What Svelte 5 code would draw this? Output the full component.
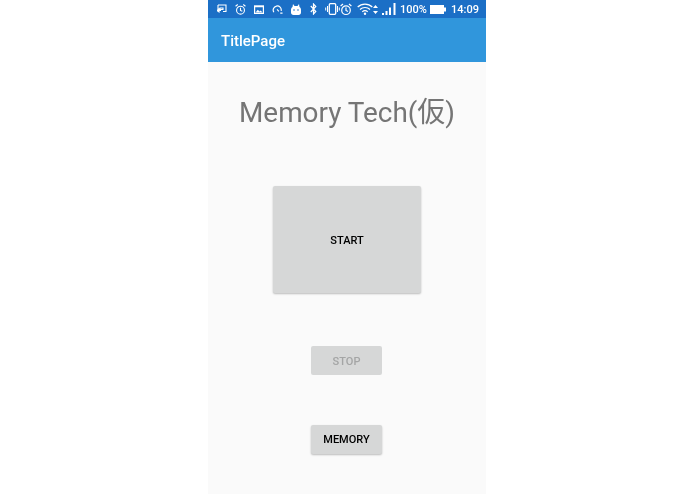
<script>
  const title = 'Memory Tech(仮)';
</script>

<div class="page">
  <main class="phone">
    <div class="status-bar">
      <div class="left-icons">
        <svg width="10" height="10" viewBox="0 0 10 10"><path d="M1 1h8v6.500H6M1 1v5.500h3M0 6.500l2-1.500v3zM3 4h3v1.500H3z" fill="none" stroke="#fff" stroke-width="1.100"/></svg>
        <svg width="11" height="13" viewBox="0 0 12 13"><circle cx="6" cy="7.200" r="4.300" fill="none" stroke="#fff" stroke-width="1.200"/><path d="M6 4.500v3l2 1M.6 3l2.400-2M11.400 3L9 1" fill="none" stroke="#fff" stroke-width="1.200"/></svg>
        <svg width="10" height="9" viewBox="0 0 10 9"><rect x=".6" y=".9" width="8.800" height="7.500" fill="none" stroke="#fff" stroke-width="1.200"/><path d="M.5 1h9v1.300H.5zM1.500 7.500l2.300-2.700 1.700 1.700 1.200-1 1.800 2z" fill="#fff"/></svg>
        <svg width="11" height="10" viewBox="0 0 12 10"><path d="M2 8.500A4.400 4.400 0 1 1 10 7" fill="none" stroke="#fff" stroke-width="1.300"/><path d="M5.500 5.500l2 2M9 9.500h2.500" fill="none" stroke="#fff" stroke-width="1.200"/></svg>
        <svg width="10" height="11" viewBox="0 0 10 11"><path d="M2 0l1.500 2h3L8 0l.5 3c1 .5 1.500 1.500 1.500 3v2.500c0 1.500-1 2.500-2.500 2.500h-5C1 11 0 10 0 8.500V6c0-1.500.5-2.500 1.500-3z" fill="#fff"/><circle cx="3" cy="6" r=".8" fill="#1b6fc6"/><circle cx="7" cy="6" r=".8" fill="#1b6fc6"/></svg>
        <svg class="bluetooth" width="7" height="12" viewBox="0 0 6 12"><path d="M.3 3l5 5.500L3 11V1l2.300 2.500L.3 9" fill="none" stroke="#fff" stroke-width="1.200"/></svg>
        <svg width="15" height="12" viewBox="0 0 15 12"><rect x="4.300" y=".7" width="6.400" height="10.600" rx="1" fill="none" stroke="#fff" stroke-width="1.300"/><path d="M2.500 3v6M.7 4.500v3M12.500 3v6M14.300 4.500v3" stroke="#fff" stroke-width="1"/></svg>
        <svg class="alarm-last" width="12" height="13" viewBox="0 0 12 13"><circle cx="6" cy="7.200" r="4.300" fill="none" stroke="#fff" stroke-width="1.200"/><path d="M6 4.500v3l2 1M.6 3l2.400-2M11.400 3L9 1" fill="none" stroke="#fff" stroke-width="1.200"/></svg>
      </div>
      <div class="right-icons">
        <svg width="16" height="12" viewBox="0 0 16 12"><path d="M.7 4a10.500 10.500 0 0 1 14.600 0M3 6.500a7.200 7.200 0 0 1 10 0M5.300 8.800a3.800 3.800 0 0 1 5.400 0" fill="none" stroke="#fff" stroke-width="1.200"/><circle cx="8" cy="10.800" r="1.200" fill="#fff"/></svg>
        <svg width="5" height="9" viewBox="0 0 5 9"><path d="M2.500 0L5 3H0zM2.500 9L0 6h5z" fill="#fff"/></svg>
        <svg class="signal" width="14" height="12" viewBox="0 0 14 12"><rect x="0" y="10" width="2" height="2" fill="#fff"/><rect x="3.500" y="8" width="2" height="4" fill="#fff"/><rect x="7" y="4.500" width="2" height="7.500" fill="#fff"/><rect x="11.500" y="0" width="2" height="12" fill="#fff"/></svg>
        <span class="percent">100%</span>
        <svg class="battery" width="16" height="9" viewBox="0 0 16 9"><path d="M0 0h14v2.500h2v4h-2V9H0z" fill="#fff"/></svg>
        <span class="clock">14:09</span>
      </div>
    </div>

    <header class="app-bar"><span>TitlePage</span></header>

    <section class="content">
      <h1>{title}</h1>
      <button class="start"><span>START</span></button>
      <button class="small stop" disabled><span>STOP</span></button>
      <button class="small memory"><span>MEMORY</span></button>
    </section>
  </main>
</div>

<style>
  :global(body) {
    margin: 0;
    background: #fff;
  }

  .page {
    display: flex;
    justify-content: center;
    height: 494px;
    overflow: hidden;
    padding-right: 1px;
    box-sizing: border-box;
  }

  .phone {
    display: flex;
    flex-direction: column;
    width: 278px;
    height: 494px;
    background: #fafafa;
    font-family: Roboto, "Noto Sans CJK JP", sans-serif;
  }

  .status-bar {
    display: flex;
    align-items: center;
    justify-content: space-between;
    flex: none;
    height: 18px;
    padding: 0 7px 0 9px;
    box-sizing: border-box;
    background: #1b6fc6;
    color: #fff;
  }

  .left-icons {
    display: flex;
    align-items: center;
    gap: 8px;
  }

  .bluetooth {
    margin-left: 1px;
  }

  .alarm-last {
    margin-left: -8px;
  }

  .right-icons {
    display: flex;
    align-items: center;
  }

  .signal {
    margin-left: 4px;
  }

  .percent {
    margin-left: 4px;
    font-size: 11px;
    font-weight: 500;
    will-change: transform;
  }

  .battery {
    margin-left: 3px;
  }

  .clock {
    margin-left: 5px;
    font-size: 11px;
    font-weight: 500;
    will-change: transform;
  }

  .app-bar {
    flex: none;
    height: 44px;
    padding-left: 12.500px;
    box-sizing: border-box;
    background: #3096dc;
    color: #fff;
    font-size: 15px;
    font-weight: 500;
    line-height: 46px;
  }

  .app-bar span {
    display: block;
    will-change: transform;
  }

  .content {
    display: flex;
    flex-direction: column;
    align-items: center;
  }

  h1 {
    margin: 33px 0 0;
    color: #757575;
    font-size: 27.900px;
    font-weight: 400;
    line-height: 36px;
    white-space: nowrap;
    will-change: transform;
  }

  button {
    padding: 1px 0 0;
    border: 0;
    border-radius: 2px;
    background: #d6d7d7;
    color: #000;
    font-family: inherit;
    font-size: 11px;
    font-weight: 500;
    box-shadow: 0 1px 2px rgba(0, 0, 0, 0.25);
  }

  button span {
    display: block;
    will-change: transform;
  }

  .start {
    width: 148px;
    height: 107px;
    margin-top: 55px;
  }

  .small {
    width: 71px;
    height: 29px;
    margin-right: 1px;
  }

  .stop {
    margin-top: 53px;
    color: #a4a5a5;
    box-shadow: none;
  }

  .memory {
    margin-top: 50px;
    padding-top: 0;
  }
</style>
